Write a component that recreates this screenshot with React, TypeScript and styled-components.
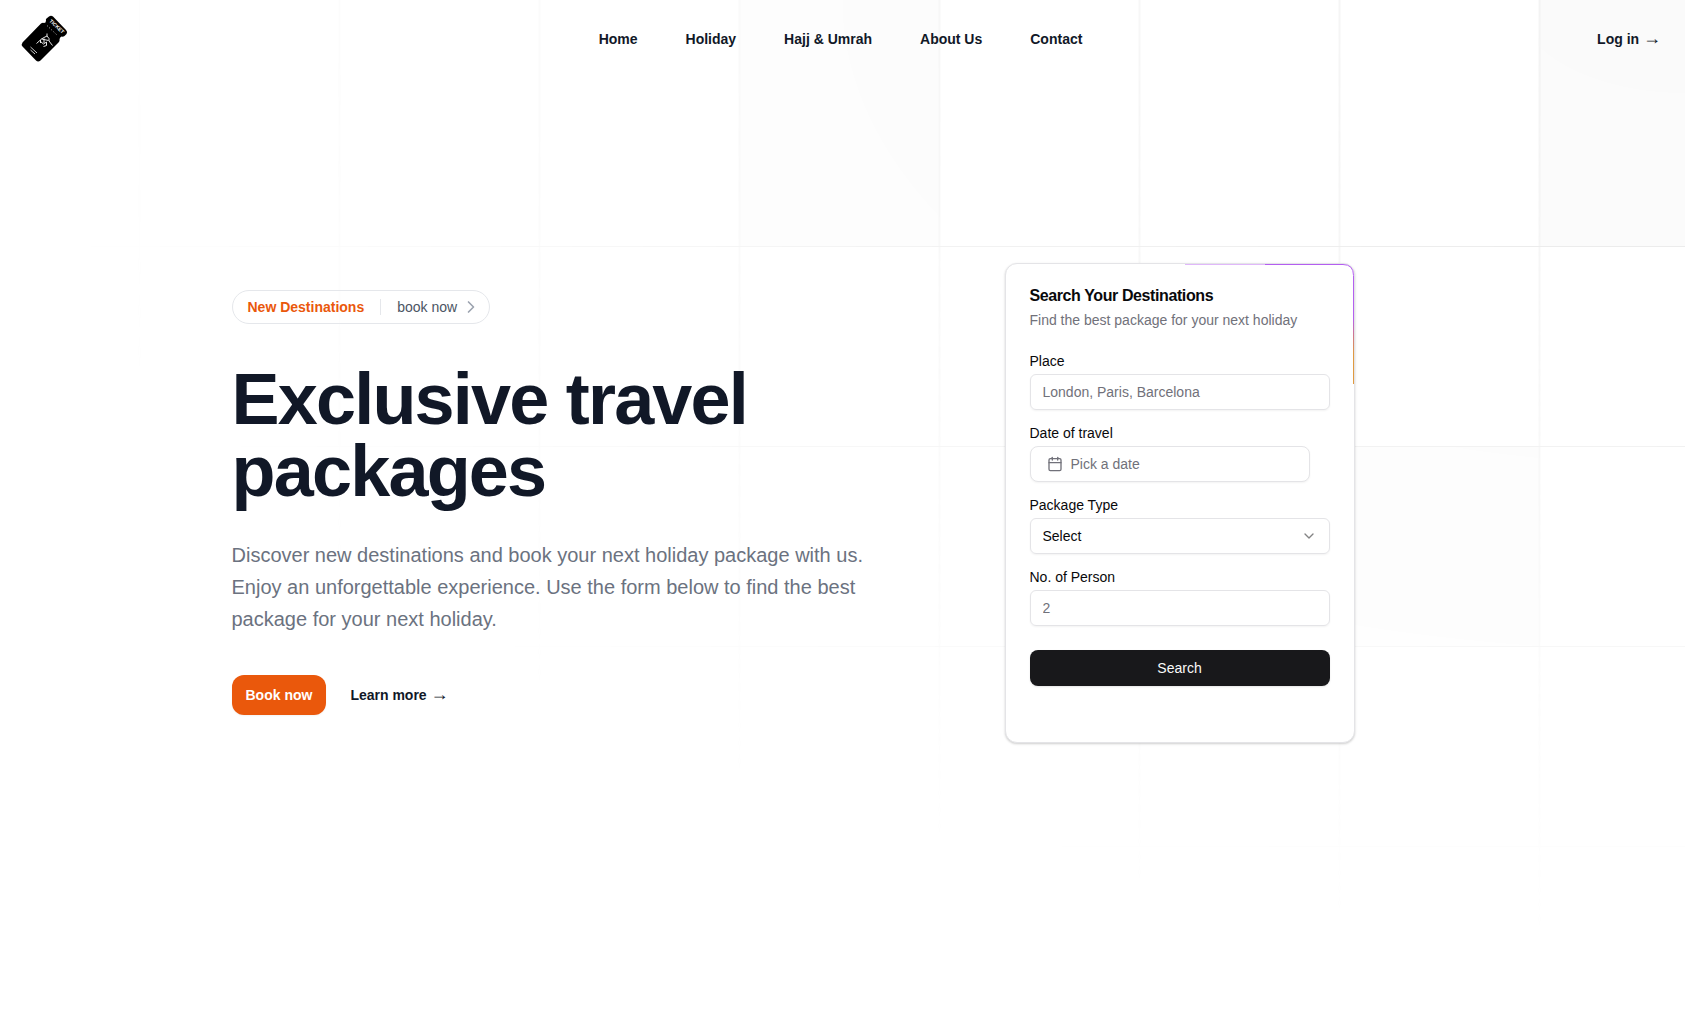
import React from "react";
import styled, { createGlobalStyle } from "styled-components";
import { Calendar, ChevronDown, ChevronRight } from "lucide-react";

const GlobalStyle = createGlobalStyle`
  *, *::before, *::after { box-sizing: border-box; }
  body {
    margin: 0;
    background: #fff;
    color: #09090b;
    font-family: "Liberation Sans", Arial, sans-serif;
    font-size: 14px;
    line-height: 20px;
  }
  h1, h2, p { margin: 0; }
  a { color: inherit; text-decoration: none; }
  button, input, select { font: inherit; color: inherit; }
`;

const Page = styled.div`
  position: relative;
  min-height: 100vh;
  overflow: hidden;
`;

const Backdrop = styled.svg`
  position: absolute;
  inset: 0;
  z-index: -1;
  width: 100%;
  height: 930px;
  stroke: #e5e5e5;
  mask-image: radial-gradient(100% 100% at top right, white, transparent);
`;

const Header = styled.header`
  display: flex;
  align-items: center;
  justify-content: space-between;
  padding: 14px 24px 14px 20px;
`;

const Side = styled.div<{ $end?: boolean }>`
  display: flex;
  flex: 1;
  justify-content: ${(p) => (p.$end ? "flex-end" : "flex-start")};
`;

const Nav = styled.nav`
  display: flex;
  gap: 48px;
`;

const TextLink = styled.a`
  color: #111827;
  font-weight: 700;
  line-height: 24px;
`;

const Arrow = styled.span`
  font-family: "Liberation Serif", serif;
  font-size: 18px;
  font-weight: 400;
  line-height: 1;
`;

const Logo = styled.svg`
  display: block;
  width: 50px;
  height: 50px;
`;

const LogoText = styled.text`
  fill: #fff;
  font-family: "Liberation Sans", Arial, sans-serif;
  font-size: 5px;
  font-weight: 700;
`;

const Hero = styled.main`
  display: flex;
  align-items: flex-start;
  justify-content: space-between;
  max-width: 1222px;
  margin: 0 auto;
  padding: 185px 99px 120px 0;
`;

const Copy = styled.section`
  max-width: 672px;
  padding-top: 27px;
`;

const Pill = styled.a`
  display: inline-flex;
  align-items: center;
  height: 34px;
  padding: 0 8px 0 15px;
  border: 1px solid #e5e7eb;
  border-radius: 17px;
  color: #4b5563;
`;

const PillLead = styled.span`
  color: #ea580c;
  font-weight: 700;
`;

const PillRule = styled.span`
  width: 1px;
  height: 16px;
  margin: 0 16px;
  background: #e5e7eb;
`;

const PillArrow = styled(ChevronRight)`
  margin-left: 4px;
  color: #9ca3af;
`;

const Title = styled.h1`
  margin-top: 39px;
  color: #111827;
  font-size: 72px;
  line-height: 72px;
  font-weight: 700;
  letter-spacing: -0.025em;
`;

const Lead = styled.p`
  margin-top: 32px;
  color: #6b7280;
  font-size: 20px;
  line-height: 32px;
`;

const Actions = styled.div`
  display: flex;
  align-items: center;
  gap: 24px;
  margin-top: 40px;
`;

const BookLink = styled.a`
  padding: 10px 14px;
  border-radius: 12px;
  background: #ea580c;
  box-shadow: 0 1px 2px rgba(0, 0, 0, 0.05);
  color: #fff;
  font-weight: 700;
`;

const Card = styled.section`
  position: relative;
  width: 350px;
  padding: 24px 24px 56px;
  border: 1px solid #e4e4e7;
  border-radius: 12px;
  background: #fff;
  box-shadow: 0 1px 3px rgba(0, 0, 0, 0.1), 0 1px 2px rgba(0, 0, 0, 0.1);
`;

const Beam = styled.svg`
  position: absolute;
  top: -1px;
  right: -1px;
  width: 170px;
  height: 121px;
  fill: none;
  pointer-events: none;
`;

const CardTitle = styled.h2`
  font-size: 16px;
  line-height: 16px;
  font-weight: 700;
  letter-spacing: -0.025em;
`;

const CardText = styled.p`
  margin-top: 6px;
  color: #71717a;
`;

const Form = styled.form`
  display: grid;
  gap: 16px;
  margin-top: 24px;
`;

const Field = styled.div`
  display: grid;
  gap: 6px;
`;

const Label = styled.label`
  line-height: 14px;
`;

const Input = styled.input`
  width: 100%;
  height: 36px;
  padding: 0 12px;
  border: 1px solid #e4e4e7;
  border-radius: 6px;
  background: transparent;
  box-shadow: 0 1px 2px rgba(0, 0, 0, 0.05);
  &::placeholder { color: #71717a; opacity: 1; }
`;

const DateButton = styled.button`
  display: flex;
  align-items: center;
  gap: 8px;
  width: 280px;
  height: 36px;
  padding: 0 16px;
  border: 1px solid #e4e4e7;
  border-radius: 8px;
  background: #fff;
  box-shadow: 0 1px 2px rgba(0, 0, 0, 0.05);
  color: #71717a;
`;

const SelectBox = styled.div`
  position: relative;
`;

const Select = styled(Input).attrs({ as: "select" })`
  appearance: none;
`;

const SelectArrow = styled(ChevronDown)`
  position: absolute;
  top: 10px;
  right: 13px;
  opacity: 0.5;
  pointer-events: none;
`;

const Submit = styled.button`
  height: 36px;
  margin-top: 8px;
  border: 0;
  border-radius: 8px;
  background: #18181b;
  box-shadow: 0 1px 2px rgba(0, 0, 0, 0.1);
  color: #fafafa;
`;

const links = ["Home", "Holiday", "Hajj & Umrah", "About Us", "Contact"];

function TicketLogo() {
  return (
    <Logo viewBox="0 0 50 50" role="img" aria-label="Ticket">
      <path
        d="M29 2.500Q31 1 33 2.500L46 16Q48 18 46.500 20L44.500 22Q43 23 41.500 22.500Q39.500 23.500 39.500 25.500Q40 27 38.500 28.500L20.500 46.500Q18 48.500 16 46.500L2.500 32.500Q1 30.500 2.500 28.500L21 9.500Q22.500 8.500 24 9Q26 9 26 6.500Q25.500 5.500 26.500 4.500Z"
        fill="#000"
      />
      <LogoText transform="translate(29 7.500) rotate(43)" textAnchor="start">TICKET</LogoText>
      <g fill="none" stroke="#fff">
        <path d="M27 11.500L37.500 21.500" strokeWidth="0.800" strokeDasharray="1 2" />
        <path d="M27 19.500V22L24 23.500L21.500 25L16.500 29.500M27 22L29 24.500V27L32.500 31.500M21.500 25L28.500 26.500M20.500 27.500L23.500 30L26.500 28V31.500L23.500 32.500M20.500 26V29M24 24.500V29" strokeWidth="0.900" />
        <path d="M10.500 33L17 39M10.500 36L15 40" strokeWidth="0.800" />
      </g>
    </Logo>
  );
}

export default function App() {
  return (
    <Page>
      <GlobalStyle />
      <Backdrop aria-hidden="true">
        <defs>
          <pattern id="columns" width="200" height="200" x="937" y="0" patternUnits="userSpaceOnUse">
            <path d="M2.500 0V200" fill="none" strokeWidth="2" strokeOpacity="0.5" />
          </pattern>
          <pattern id="rows" width="200" height="200" x="0" y="246" patternUnits="userSpaceOnUse">
            <path d="M0 .5H200" fill="none" />
          </pattern>
        </defs>
        <path
          d="M740 0h200v246h-200Z M1540 0h200v246h-200Z M1340 446h200v200h-200Z"
          fill="#fafafa"
          strokeWidth="0"
        />
        <rect width="100%" height="100%" fill="url(#columns)" strokeWidth="0" />
        <rect y="240" width="100%" height="100%" fill="url(#rows)" strokeWidth="0" />
      </Backdrop>
      <Header>
        <Side>
          <a href="#home"><TicketLogo /></a>
        </Side>
        <Nav aria-label="Main">
          {links.map((name) => (
            <TextLink key={name} href="#nav">{name}</TextLink>
          ))}
        </Nav>
        <Side $end>
          <TextLink href="#login">Log in <Arrow>→</Arrow></TextLink>
        </Side>
      </Header>
      <Hero>
        <Copy>
          <Pill href="#book">
            <PillLead>New Destinations</PillLead>
            <PillRule />
            book now
            <PillArrow size={20} strokeWidth={2} />
          </Pill>
          <Title>Exclusive travel packages</Title>
          <Lead>
            Discover new destinations and book your next holiday package with us. Enjoy an
            unforgettable experience. Use the form below to find the best package for your next
            holiday.
          </Lead>
          <Actions>
            <BookLink href="#book">Book now</BookLink>
            <TextLink href="#more">Learn more <Arrow>→</Arrow></TextLink>
          </Actions>
        </Copy>
        <Card>
          <CardTitle>Search Your Destinations</CardTitle>
          <CardText>Find the best package for your next holiday</CardText>
          <Form>
            <Field>
              <Label htmlFor="place">Place</Label>
              <Input id="place" placeholder="London, Paris, Barcelona" />
            </Field>
            <Field>
              <Label htmlFor="date">Date of travel</Label>
              <DateButton id="date" type="button">
                <Calendar size={16} />
                Pick a date
              </DateButton>
            </Field>
            <Field>
              <Label htmlFor="type">Package Type</Label>
              <SelectBox>
                <Select id="type">
                  <option>Select</option>
                </Select>
                <SelectArrow size={16} />
              </SelectBox>
            </Field>
            <Field>
              <Label htmlFor="persons">No. of Person</Label>
              <Input id="persons" placeholder="2" />
            </Field>
            <Submit type="submit">Search</Submit>
          </Form>
          <Beam viewBox="0 0 170 121" aria-hidden="true">
            <defs>
              <linearGradient id="beam" x1="0" y1="0" x2="0" y2="1">
                <stop offset="0.45" stopColor="#b45ff0" />
                <stop offset="0.6" stopColor="#d07888" />
                <stop offset="0.75" stopColor="#e09a40" />
              </linearGradient>
            </defs>
            <path d="M0 1.500H80" stroke="#e0b8fa" />
            <path d="M80 1.500H158Q168.500 1.500 168.500 12.500V121" stroke="url(#beam)" />
          </Beam>
        </Card>
      </Hero>
    </Page>
  );
}
